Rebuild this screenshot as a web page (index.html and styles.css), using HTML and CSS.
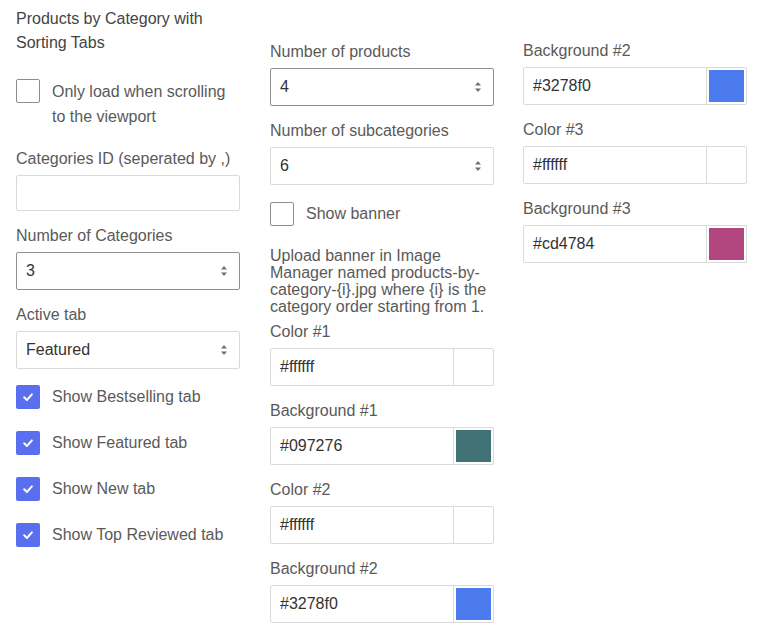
FILE: index.html
```html
<!DOCTYPE html>
<html>
<head>
<meta charset="utf-8">
<link rel="stylesheet" href="styles.css">
</head>
<body>
<div class="page">
  <div class="col col1">
    <div class="title">Products by Category with Sorting Tabs</div>
    <div class="check first">
      <span class="box"></span>
      <span class="check-text">Only load when scrolling to the viewport</span>
    </div>
    <div class="group">
      <div class="label">Categories ID (seperated by ,)</div>
      <div class="field text"></div>
    </div>
    <div class="group">
      <div class="label">Number of Categories</div>
      <div class="field dark"><span class="val">3</span><svg class="spin" width="8" height="14" viewBox="0 0 8 14"><path d="M1 5.5 L4 2 L7 5.5 Z M1 8.5 L4 12 L7 8.5 Z" fill="#6f6f6f"/></svg></div>
    </div>
    <div class="group">
      <div class="label">Active tab</div>
      <div class="field"><span class="val">Featured</span><svg class="spin" width="8" height="14" viewBox="0 0 8 14"><path d="M1 5.5 L4 2 L7 5.5 Z M1 8.5 L4 12 L7 8.5 Z" fill="#6f6f6f"/></svg></div>
    </div>
    <div class="checks">
      <div class="check"><span class="box on"><svg width="24" height="24" viewBox="0 0 24 24"><path d="M8.2 12.3 L10.9 15 L15.9 9.4" fill="none" stroke="#fff" stroke-width="2" stroke-linecap="round" stroke-linejoin="round"/></svg></span><span class="check-text">Show Bestselling tab</span></div>
      <div class="check"><span class="box on"><svg width="24" height="24" viewBox="0 0 24 24"><path d="M8.2 12.3 L10.9 15 L15.9 9.4" fill="none" stroke="#fff" stroke-width="2" stroke-linecap="round" stroke-linejoin="round"/></svg></span><span class="check-text">Show Featured tab</span></div>
      <div class="check"><span class="box on"><svg width="24" height="24" viewBox="0 0 24 24"><path d="M8.2 12.3 L10.9 15 L15.9 9.4" fill="none" stroke="#fff" stroke-width="2" stroke-linecap="round" stroke-linejoin="round"/></svg></span><span class="check-text">Show New tab</span></div>
      <div class="check"><span class="box on"><svg width="24" height="24" viewBox="0 0 24 24"><path d="M8.2 12.3 L10.9 15 L15.9 9.4" fill="none" stroke="#fff" stroke-width="2" stroke-linecap="round" stroke-linejoin="round"/></svg></span><span class="check-text">Show Top Reviewed tab</span></div>
    </div>
  </div>

  <div class="col col2">
    <div class="group">
      <div class="label">Number of products</div>
      <div class="field dark"><span class="val">4</span><svg class="spin" width="8" height="14" viewBox="0 0 8 14"><path d="M1 5.5 L4 2 L7 5.5 Z M1 8.5 L4 12 L7 8.5 Z" fill="#6f6f6f"/></svg></div>
    </div>
    <div class="group">
      <div class="label">Number of subcategories</div>
      <div class="field"><span class="val">6</span><svg class="spin" width="8" height="14" viewBox="0 0 8 14"><path d="M1 5.5 L4 2 L7 5.5 Z M1 8.5 L4 12 L7 8.5 Z" fill="#6f6f6f"/></svg></div>
    </div>
    <div class="check single">
      <span class="box"></span>
      <span class="check-text">Show banner</span>
    </div>
    <div class="help">Upload banner in Image Manager named products-by-category-{i}.jpg where {i} is the category order starting from 1.</div>
    <div class="group">
      <div class="label">Color #1</div>
      <div class="color"><span class="val">#ffffff</span><span class="sw"><span class="chip"></span></span></div>
    </div>
    <div class="group">
      <div class="label">Background #1</div>
      <div class="color"><span class="val">#097276</span><span class="sw"><span class="chip" style="background:#407174"></span></span></div>
    </div>
    <div class="group">
      <div class="label">Color #2</div>
      <div class="color"><span class="val">#ffffff</span><span class="sw"><span class="chip"></span></span></div>
    </div>
    <div class="group">
      <div class="label">Background #2</div>
      <div class="color"><span class="val">#3278f0</span><span class="sw"><span class="chip" style="background:#4b7bed"></span></span></div>
    </div>
  </div>

  <div class="col col3">
    <div class="group">
      <div class="label">Background #2</div>
      <div class="color"><span class="val">#3278f0</span><span class="sw"><span class="chip" style="background:#4b7bed"></span></span></div>
    </div>
    <div class="group">
      <div class="label">Color #3</div>
      <div class="color"><span class="val">#ffffff</span><span class="sw"><span class="chip"></span></span></div>
    </div>
    <div class="group">
      <div class="label">Background #3</div>
      <div class="color"><span class="val">#cd4784</span><span class="sw"><span class="chip" style="background:#b2467f"></span></span></div>
    </div>
  </div>
</div>
</body>
</html>
```

FILE: styles.css
```css
* { box-sizing: border-box; }
html, body { margin: 0; padding: 0; background: #fff; }
body {
  font-family: "Liberation Sans", Arial, sans-serif;
  font-size: 16px;
  color: #5a5a5a;
}
.page {
  display: flex;
  align-items: flex-start;
  padding-left: 16px;
}
.col { width: 224px; flex: none; }
.col1 { padding-top: 7px; margin-right: 30px; }
.col2 { padding-top: 40px; margin-right: 29px; }
.col3 { padding-top: 39px; }

.title {
  line-height: 24px;
  color: #444;
  margin-bottom: 24px;
}
.check {
  display: flex;
  align-items: flex-start;
  gap: 12px;
}
.check-text { line-height: 24px; }
.check.first { margin-bottom: 18px; }
.check.first .check-text { line-height: 25px; }
.box {
  width: 24px;
  height: 24px;
  flex: none;
  border: 1px solid #8d8d8d;
  border-radius: 2px;
  background: #fff;
}
.box.on {
  border: none;
  background: #5a6ef0;
}
.box svg { display: block; }

.group { margin-bottom: 13px; }
.label {
  line-height: 22px;
  padding-top: 1px;
  margin-bottom: 5px;
}
.field {
  height: 38px;
  border: 1px solid #dadada;
  border-radius: 2px;
  display: flex;
  align-items: center;
  justify-content: space-between;
  padding: 0 11px 0 9px;
  color: #333;
}
.field.text { height: 36px; }
.field.dark { border-color: #8f8f8f; }
.spin { display: block; }

.checks {
  margin-top: 16px;
  display: flex;
  flex-direction: column;
  gap: 22px;
}
.check.single { margin-top: 17px; margin-bottom: 21px; }

.help {
  line-height: 17px;
  margin-bottom: 5px;
}

.color {
  height: 38px;
  border: 1px solid #dadada;
  border-radius: 2px;
  display: flex;
  align-items: stretch;
  color: #333;
}
.color .val {
  flex: 1;
  display: flex;
  align-items: center;
  padding-left: 9px;
}
.color .sw {
  width: 40px;
  border-left: 1px solid #dadada;
  padding: 2px;
  display: flex;
}
.chip { flex: 1; }
```
